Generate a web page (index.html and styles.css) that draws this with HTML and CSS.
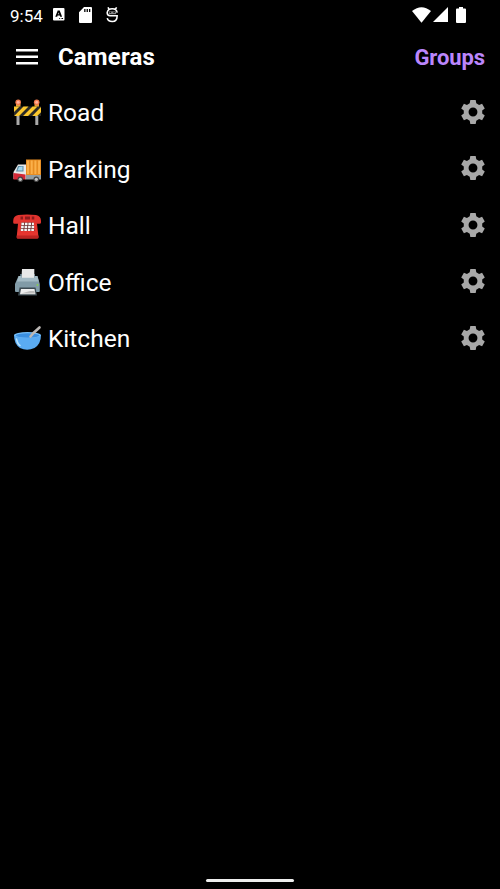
FILE: index.html
```html
<!DOCTYPE html>
<html lang="en">
<head>
<meta charset="utf-8">
<title>Cameras</title>
<link rel="stylesheet" href="styles.css">
</head>
<body>
<svg class="defs" aria-hidden="true">
  <symbol id="gear" viewBox="0 0 24 24"><path fill-rule="evenodd" d="M9.700 1.800h4.600l.5 2.800 2.400 1.400 2.600-1 2.300 4-2.200 1.700v2.600l2.200 1.700-2.300 4-2.600-1-2.400 1.400-.5 2.800H9.700l-.5-2.800L6.800 18l-2.600 1-2.300-4 2.200-1.700v-2.600L1.900 9l2.300-4 2.600 1 2.400-1.400zM12 8.200a3.800 3.800 0 1 0 0 7.600 3.800 3.800 0 0 0 0-7.600z"/></symbol>
</svg>
<div class="screen">
  <div class="status">
    <span class="time">9:54</span>
    <svg class="ic-a" viewBox="0 0 12 13"><path fill-rule="evenodd" d="M1 0h10q1 0 1 1v11q0 1-1 1H1q-1 0-1-1V1q0-1 1-1zM4.900 2.500 2.400 9h2l.4-1.200h2.300L7.500 9h2L7 2.500zM5.950 4.600l.6 1.800H5.350zM6.500 10.500v1h1v-1zm2.300 0v1h1.700v-1z"/></svg>
    <svg class="ic-sd" viewBox="0 0 13 16"><path fill-rule="evenodd" d="M5 0h7q1 0 1 1v14q0 1-1 1H1q-1 0-1-1V5.200zM5.200 2v3h1.300V2zm2.400 0v3h1.300V2zM10 2v3h1.300V2z"/></svg>
    <svg class="ic-s" viewBox="0 0 13 16"><path d="M11.600 5.500Q11 1.500 6.500 1.500T1.200 5.500q0 3.300 3 3.300h7.400q0 6-5.100 6-4.500 0-5.200-3.500M2 0l1.300 2.200M11 0 9.700 2.200" fill="none" stroke="#fff" stroke-width="1.600"/><path d="M3 4.200h7.500v3H3z" fill="#888"/><path d="M3.800 4.500h1.500v1.500H3.800zm3.900 0h1.500v1.500H7.700z" fill="#111"/></svg>
    <span class="grow"></span>
    <svg class="ic-wifi" viewBox="0 0 19 16"><path d="M0 4Q9.500-3.600 19 4L9.500 15.700z"/></svg>
    <svg class="ic-sig" viewBox="0 0 15 15"><path d="M15 0v15H0z"/></svg>
    <svg class="ic-bat" viewBox="0 0 10 16"><path d="M3 0h4v1.600h2q1 0 1 1V15q0 1-1 1H1q-1 0-1-1V2.600q0-1 1-1h2z"/></svg>
  </div>
  <header class="bar">
    <svg class="menu" viewBox="0 0 22 16"><path d="M0 0h22v2.500H0zM0 6.500h22V9H0zM0 13h22v2.500H0z"/></svg>
    <h1>Cameras</h1>
    <span class="groups">Groups</span>
  </header>
  <ul class="list">
    <li>
      <svg class="emoji" viewBox="0 0 30 30">
        <path d="M4.500 9h3v19h-3zM23.300 9h3v19h-3z" fill="#a9a9a9"/>
        <path d="M4 7h4.500v3H4zM22.500 7H27v3h-4.500z" fill="#e5a03a"/>
        <circle cx="6.200" cy="5.300" r="2.800" fill="#f47a4c"/><circle cx="24.700" cy="5.300" r="2.800" fill="#f47a4c"/>
        <circle cx="6.200" cy="5.300" r="1.500" fill="#ffb09a"/><circle cx="24.700" cy="5.300" r="1.500" fill="#ffb09a"/>
        <path d="M2 9.500h27V19H2z" fill="#2b2b28"/>
        <path d="M2 9.500h5.500L2 15zM11.500 9.500h5L7 19H2.200zM20.500 9.500h5L16 19h-5zM29 10v5.200L25.200 19h-5z" fill="#fdc82c"/>
      </svg>
      <span class="name">Road</span><svg class="gear"><use href="#gear"/></svg>
    </li>
    <li>
      <svg class="emoji" viewBox="0 0 30 30">
        <path d="M13 21h16v4.500H13z" fill="#939da1"/>
        <path d="M14 5.500h15V21H14z" fill="#e78d22"/>
        <path d="M16 6.500V20M19.700 6.500V20M23.400 6.500V20M27.100 6.500V20" stroke="#fbb04a" stroke-width="2"/>
        <path d="M6 10.500h8V25H1.500v-7z" fill="#e8e8e8"/>
        <path d="M6 12h5.500v5.500H4z" fill="#5d8ba2"/>
        <path d="m7 13 3.500-.5v4H5.500z" fill="#a5d9f0"/>
        <path d="M1.500 19 13.500 20.500v5h-12z" fill="#d32736"/>
        <circle cx="8.300" cy="25.300" r="2.800" fill="#444"/><circle cx="24.300" cy="25.300" r="2.800" fill="#444"/>
        <circle cx="8.300" cy="25.300" r="1.600" fill="#c5c5c5"/><circle cx="24.300" cy="25.300" r="1.600" fill="#c5c5c5"/>
      </svg>
      <span class="name">Parking</span><svg class="gear"><use href="#gear"/></svg>
    </li>
    <li>
      <svg class="emoji" viewBox="0 0 30 30">
        <path d="M7 9h16l2 5 1.500 13q0 1.500-1.500 1.500H6Q4.700 28.500 4.700 27L6 14z" fill="#e5352f"/>
        <path d="M4.700 25.500h21.800v2q0 1-1 1H5.700q-1 0-1-1z" fill="#bd2522"/>
        <path d="M1.200 11q0-5 5-6Q15 3.800 24 5q5 1 5 6v1.500q0 1.300-1.500 1.300H23q-1.500 0-1.500-1.500V9.500h-13v2.800q0 1.500-1.500 1.500H2.500q-1.300 0-1.300-1.300z" fill="#e0332e"/>
        <path d="M8.500 6.500H11v3H8.500zM13 6.500h5v3h-5zM19.800 6.500h2.500v3h-2.500z" fill="#8c1b1c"/>
        <path d="M9.500 12.500h12l1 8.500h-14z" fill="#6e3433"/>
        <path d="M9.400 13.800h12.500M9.100 16.800h13M8.800 19.800h13.700" stroke="#f5f5f5" stroke-width="2.200" stroke-dasharray="2.600 .9"/>
      </svg>
      <span class="name">Hall</span><svg class="gear"><use href="#gear"/></svg>
    </li>
    <li>
      <svg class="emoji" viewBox="0 0 30 30">
        <path d="M8 7h15v5H8z" fill="#526b77"/>
        <path d="M10 2h12.300v9H9.500z" fill="#e8e8e8"/>
        <path d="M6.500 9h3v2h13V9h3l2.300 8v7q0 1-1 1H4q-1 0-1-1v-7z" fill="#819ba7"/>
        <path d="M6.800 9h2.700v1.800h13V9h2.800l1.500 5.500H5z" fill="#a3bac4"/>
        <path d="M7.500 20.500h16l1.500 8H6z" fill="#3d4b52"/>
        <path d="M9 22h13.500l1 5.200H8z" fill="#efefef"/>
        <path d="m9 26.500 9-2.500h4.500l.5 2.500z" fill="#bdbdbd"/>
        <circle cx="25.500" cy="18" r=".9" fill="#8bd44a"/>
      </svg>
      <span class="name">Office</span><svg class="gear"><use href="#gear"/></svg>
    </li>
    <li>
      <svg class="emoji" viewBox="0 0 30 30">
        <path d="M2 12q0 9 6 13 7 3.500 14.500 0Q29 21 29 12z" fill="#5aabf2"/>
        <ellipse cx="15.500" cy="12" rx="13.400" ry="3" fill="#77c0fa"/>
        <ellipse cx="15.500" cy="12.500" rx="12" ry="2.200" fill="#3b8fe0"/>
        <path d="m18.500 13.500 3-3.500 6-5.500" fill="none" stroke="#bcb8b5" stroke-width="2.600" stroke-linecap="round"/>
        <path d="M4.500 16q1 5 3.500 6.500" fill="none" stroke="#b5e2ff" stroke-width="1.500" stroke-linecap="round"/>
      </svg>
      <span class="name">Kitchen</span><svg class="gear"><use href="#gear"/></svg>
    </li>
  </ul>
  <div class="home"></div>
</div>
</body>
</html>
```
FILE: styles.css
```css
* { box-sizing: border-box; }
body {
  margin: 0;
  background: #000;
  color: #fff;
  font-family: Roboto, sans-serif;
}
svg { display: block; flex: none; fill: #fff; }
.defs { display: none; }
.screen { height: 889px; display: flex; flex-direction: column; overflow: hidden; }
.status { height: 30px; display: flex; align-items: center; padding: 0 34px 1px 10px; }
.time { font-size: 17px; width: 43px; line-height: 28px; padding-top: 2px; }
.ic-a { width: 11.500px; height: 12.500px; }
.ic-sd { width: 13px; height: 16px; margin-left: 14px; }
.ic-s { width: 12.500px; height: 16px; margin-left: 14px; }
.grow { flex: 1; }
.ic-wifi { width: 19px; height: 16px; }
.ic-sig { width: 15px; height: 15px; margin-left: 2px; }
.ic-bat { width: 10px; height: 16px; margin-left: 8.500px; }
.bar { height: 54px; display: flex; align-items: center; padding: 0 15px 0 16px; }
.menu { width: 22px; height: 16px; }
.bar h1 { margin: 0 auto 0 20px; font-size: 24px; font-weight: 700; letter-spacing: 0.150px; }
.groups { color: #bb86fc; font-size: 22px; font-weight: 700; letter-spacing: -0.100px; }
.list { list-style: none; margin: 0; padding: 0; flex: 1; }
.list li { height: 56.500px; display: flex; align-items: center; padding: 0 13px 0 12px; }
.emoji { width: 30px; height: 30px; }
.name { flex: 1; margin-left: 6px; padding-top: 2px; font-size: 24.500px; line-height: 30px; }
.gear { width: 28px; height: 28px; margin-bottom: 1px; fill: #a8a8a8; }
.home { width: 88px; height: 3px; margin: 0 auto 7px; background: #eee; border-radius: 2px; }
```
